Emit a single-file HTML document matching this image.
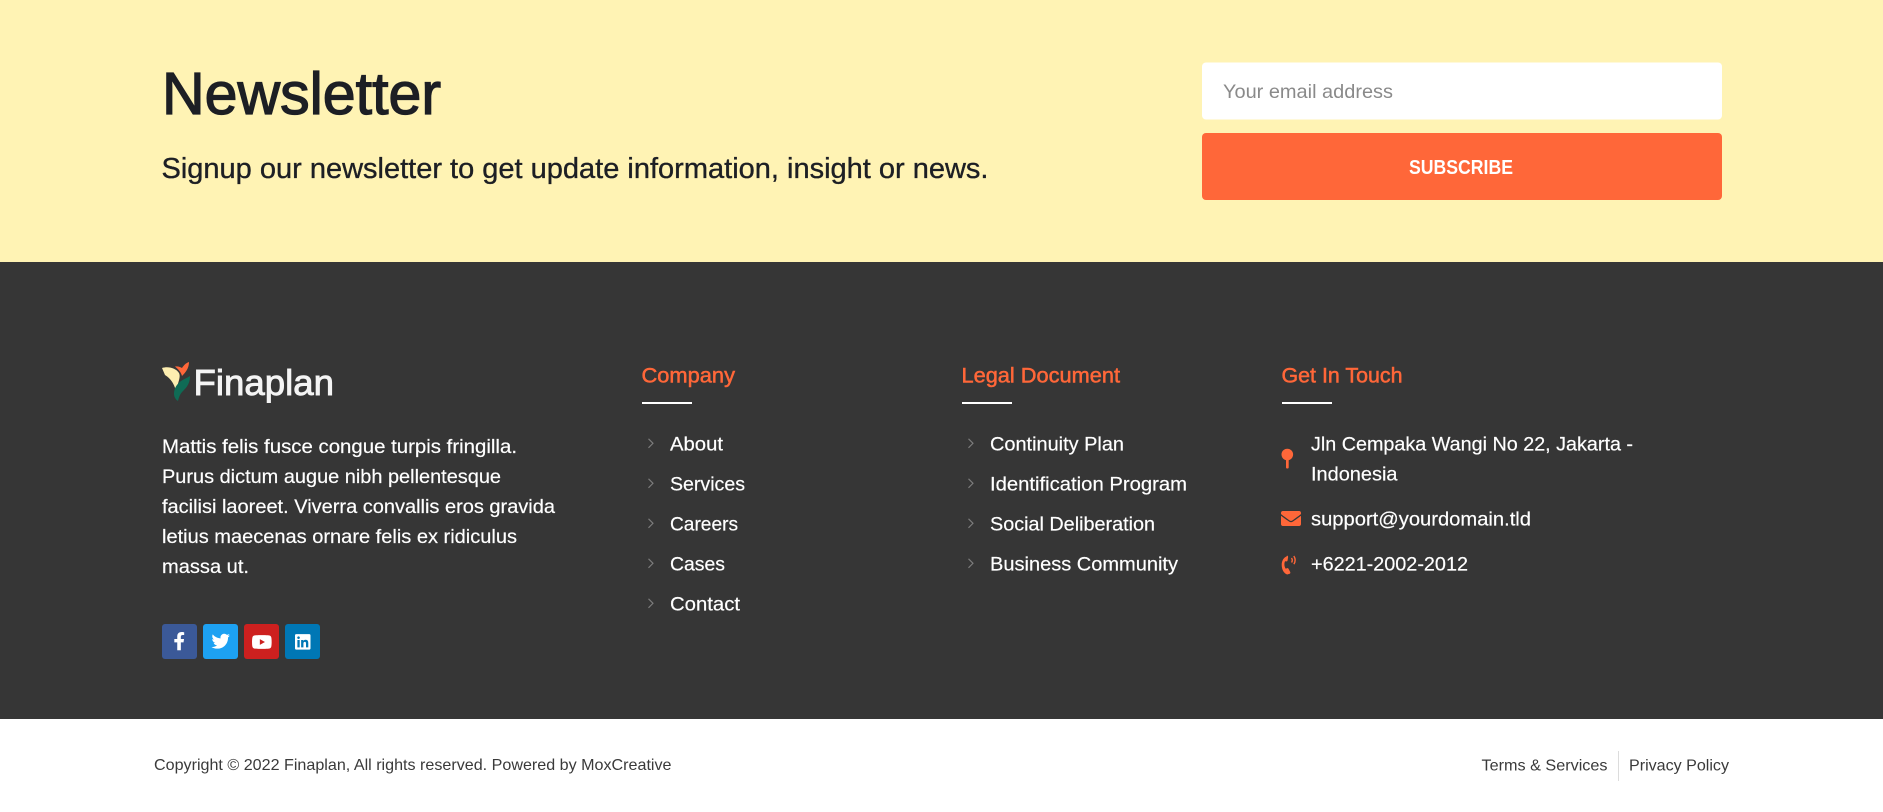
<!DOCTYPE html>
<html><head><meta charset="utf-8"><title>Finaplan Footer</title>
<style>
html,body{margin:0;padding:0;background:#fff;width:1883px;height:812px;overflow:hidden}
svg{display:block}
text{font-family:"Liberation Sans",sans-serif}
.w{fill:#fff;font-size:19.4px;stroke:#fff;stroke-width:.18px}
.h{fill:#ff6739;font-size:21px;stroke:#ff6739;stroke-width:.5px}
.g{fill:#3a3a3a;font-size:15.8px}
.c{fill:none;stroke:#7d7d7d;stroke-width:1.1}
</style></head><body>
<svg xmlns="http://www.w3.org/2000/svg" width="1883" height="812" viewBox="0 0 1883 812">
<rect width="1883" height="262" fill="#fff3b4"/>
<rect y="262" width="1883" height="457" fill="#363636"/>
<rect y="719" width="1883" height="93" fill="#fff"/>

<text x="162" y="114" font-size="59" fill="#1d1f24" stroke="#1d1f24" stroke-width="1.3" textLength="279" lengthAdjust="spacingAndGlyphs">Newsletter</text>
<text x="161.500" y="178" font-size="28.500" fill="#1d1f24" stroke="#1d1f24" stroke-width=".35" textLength="827" lengthAdjust="spacingAndGlyphs">Signup our newsletter to get update information, insight or news.</text>

<rect x="1202" y="62.500" width="520" height="57" rx="4" fill="#fff"/>
<text x="1223" y="98" font-size="19.400" fill="#8a8a8a" textLength="170" lengthAdjust="spacingAndGlyphs">Your email address</text>
<rect x="1202" y="133" width="520" height="67" rx="4" fill="#ff6739"/>
<text x="1409" y="174" font-size="20" font-weight="bold" fill="#fff" textLength="104" lengthAdjust="spacingAndGlyphs">SUBSCRIBE</text>

<!-- logo -->
<path d="M162 368C168 366 176 368 179 373C181 377 178 382 176 391C174 383 170 378 165 375Z" fill="#fdeeb0"/>
<path d="M175 366.500C178 366 180 367 182 368C184 365 186 363 189 362C189 368 186 372 182 376C181 372 178 369 175 366.500Z" fill="#ff6739"/>
<path d="M190 376C190 384 186 388 183 391C180 394 179 397 178 401C176 400 174 397 174 394C174 388 177 384 181 381C184 379 187 378 190 376Z" fill="#0f6b55"/>
<text x="193.500" y="395" font-size="36.500" fill="#f4f4f4" stroke="#f4f4f4" stroke-width=".9" textLength="140.500" lengthAdjust="spacingAndGlyphs">Finaplan</text>

<text class="w" x="162" y="453" textLength="355" lengthAdjust="spacingAndGlyphs">Mattis felis fusce congue turpis fringilla.</text>
<text class="w" x="162" y="483" textLength="339" lengthAdjust="spacingAndGlyphs">Purus dictum augue nibh pellentesque</text>
<text class="w" x="162" y="513" textLength="393" lengthAdjust="spacingAndGlyphs">facilisi laoreet. Viverra convallis eros gravida</text>
<text class="w" x="162" y="543" textLength="355" lengthAdjust="spacingAndGlyphs">letius maecenas ornare felis ex ridiculus</text>
<text class="w" x="162" y="573" textLength="87" lengthAdjust="spacingAndGlyphs">massa ut.</text>

<!-- social -->
<rect x="162" y="624" width="35" height="35" rx="3" fill="#3b5998"/>
<rect x="203" y="624" width="35" height="35" rx="3" fill="#1da1f2"/>
<rect x="244" y="624" width="35" height="35" rx="3" fill="#cd201f"/>
<rect x="285" y="624" width="35" height="35" rx="3" fill="#0077b5"/>
<svg x="173.500" y="632" width="11.500" height="18.400" viewBox="0 0 320 512"><path fill="#fff" d="M279.14 288l14.22-92.66h-88.91v-60.13c0-25.35 12.42-50.06 52.24-50.06h40.42V6.26S260.43 0 225.36 0c-73.22 0-121.08 44.38-121.08 124.72v70.62H22.89V288h81.39v224h100.17V288z"/></svg>
<svg x="211.500" y="632" width="18.400" height="18.400" viewBox="0 0 512 512"><path fill="#fff" d="M459.37 151.716c.325 4.548.325 9.097.325 13.645 0 138.72-105.583 298.558-298.558 298.558-59.452 0-114.68-17.219-161.137-47.106 8.447.974 16.568 1.299 25.34 1.299 49.055 0 94.213-16.568 130.274-44.832-46.132-.975-84.792-31.188-98.112-72.772 6.498.974 12.995 1.624 19.818 1.624 9.421 0 18.843-1.3 27.614-3.573-48.081-9.747-84.143-51.98-84.143-102.985v-1.299c13.969 7.797 30.214 12.67 47.431 13.319-28.264-18.843-46.781-51.005-46.781-87.391 0-19.492 5.197-37.36 14.294-52.954 51.655 63.675 129.3 105.258 216.365 109.807-1.624-7.797-2.599-15.918-2.599-24.04 0-57.828 46.782-104.934 104.934-104.934 30.213 0 57.502 12.67 76.67 33.137 23.715-4.548 46.456-13.32 66.599-25.34-7.798 24.366-24.366 44.833-46.132 57.827 21.117-2.273 41.584-8.122 60.426-16.243-14.292 20.791-32.161 39.308-52.628 54.253z"/></svg>
<svg x="251.500" y="632.800" width="20.700" height="20.700" viewBox="0 0 576 576"><path fill="#fff" fill-rule="evenodd" d="M549.655 124.083c-6.281-23.65-24.787-42.276-48.284-48.597C458.781 64 288 64 288 64S117.22 64 74.629 75.486c-23.497 6.322-42.003 24.947-48.284 48.597-11.412 42.867-11.412 132.305-11.412 132.305s0 89.438 11.412 132.305c6.281 23.65 24.787 41.5 48.284 47.821C117.22 448 288 448 288 448s170.78 0 213.371-11.486c23.497-6.321 42.003-24.171 48.284-47.821 11.412-42.867 11.412-132.305 11.412-132.305s0-89.438-11.412-132.305zm-317.51 213.508V175.185l142.739 81.205-142.739 81.201z"/></svg>
<svg x="295" y="633" width="15.500" height="17.700" viewBox="0 0 448 512"><path fill="#fff" d="M416 32H31.9C14.3 32 0 46.5 0 64.3v383.4C0 465.5 14.3 480 31.9 480H416c17.6 0 32-14.5 32-32.3V64.3c0-17.8-14.4-32.3-32-32.3zM135.4 416H69V202.2h66.5V416zm-33.2-243c-21.3 0-38.5-17.3-38.5-38.5S80.9 96 102.2 96c21.2 0 38.5 17.3 38.5 38.5 0 21.3-17.2 38.5-38.5 38.5zm282.1 243h-66.4V312c0-24.8-.5-56.7-34.5-56.7-34.6 0-39.9 26.4-39.9 53.6V416h-66.4V202.2h63.7v29.2h.9c8.9-16.8 30.6-34.5 62.9-34.5 67.2 0 79.7 44.3 79.7 101.9V416z"/></svg>

<!-- headings -->
<text class="h" x="641.500" y="382.500" textLength="93.500" lengthAdjust="spacingAndGlyphs">Company</text>
<text class="h" x="961.500" y="382.500" textLength="158.500" lengthAdjust="spacingAndGlyphs">Legal Document</text>
<text class="h" x="1281.500" y="382.500" textLength="121" lengthAdjust="spacingAndGlyphs">Get In Touch</text>
<rect x="642" y="402" width="50" height="2" fill="#fff"/>
<rect x="962" y="402" width="50" height="2" fill="#fff"/>
<rect x="1282" y="402" width="50" height="2" fill="#fff"/>

<!-- lists -->
<path class="c" d="M648.500 438.800l4.500 4.500-4.500 4.500M648.500 478.800l4.500 4.500-4.500 4.500M648.500 518.800l4.500 4.500-4.500 4.500M648.500 558.800l4.500 4.500-4.500 4.500M648.500 598.800l4.500 4.500-4.500 4.500M968.500 438.800l4.500 4.500-4.500 4.500M968.500 478.800l4.500 4.500-4.500 4.500M968.500 518.800l4.500 4.500-4.500 4.500M968.500 558.800l4.500 4.500-4.500 4.500"/>
<text class="w" x="670" y="450.700" textLength="53" lengthAdjust="spacingAndGlyphs">About</text>
<text class="w" x="670" y="490.700" textLength="75" lengthAdjust="spacingAndGlyphs">Services</text>
<text class="w" x="670" y="530.700" textLength="68" lengthAdjust="spacingAndGlyphs">Careers</text>
<text class="w" x="670" y="570.700" textLength="55" lengthAdjust="spacingAndGlyphs">Cases</text>
<text class="w" x="670" y="610.700" textLength="70" lengthAdjust="spacingAndGlyphs">Contact</text>
<text class="w" x="990" y="450.700" textLength="134" lengthAdjust="spacingAndGlyphs">Continuity Plan</text>
<text class="w" x="990" y="490.700" textLength="197" lengthAdjust="spacingAndGlyphs">Identification Program</text>
<text class="w" x="990" y="530.700" textLength="165" lengthAdjust="spacingAndGlyphs">Social Deliberation</text>
<text class="w" x="990" y="570.700" textLength="188" lengthAdjust="spacingAndGlyphs">Business Community</text>

<!-- contact -->
<circle cx="1287.300" cy="454.500" r="5.800" fill="#ff6739"/>
<rect x="1286" y="459" width="2.700" height="9.500" rx="1" fill="#ff6739"/>
<svg x="1281" y="510.500" width="20" height="26" viewBox="0 0 512 666"><path fill="#ff6739" d="M502.3 190.8c3.9-3.1 9.7-.2 9.7 4.7V400c0 26.5-21.5 48-48 48H48c-26.5 0-48-21.5-48-48V195.600c0-5 5.700-7.800 9.700-4.700 22.400 17.400 52.100 39.500 154.100 113.600 21.100 15.400 56.700 47.800 92.200 47.600 35.700.3 72-32.800 92.300-47.600 102-74.100 131.600-96.300 154-113.700zM256 320c23.200.4 56.600-29.200 73.400-41.400 132.700-96.300 142.800-104.700 173.400-128.700 5.800-4.500 9.200-11.500 9.200-18.900v-19c0-26.500-21.500-48-48-48H48C21.500 64 0 85.500 0 112v19c0 7.400 3.400 14.300 9.200 18.900 30.600 23.900 40.700 32.400 173.400 128.700 16.800 12.200 50.200 41.800 73.400 41.400z" transform="translate(0 -50)"/></svg>
<path fill="#ff6739" d="M1286.500 556.500c-3 1-4.800 4.500-4.800 8.500 0 4.500 2.300 8.500 5.500 9.500l2.500-.8c.8-.4.8-1.200.4-2l-1.600-3c-.4-.6-1-.8-1.700-.4l-1 .5c-1-1.200-1.500-3-1.400-5 .1-1 .3-1.900.7-2.600l1.200.2c.7.100 1.200-.3 1.300-1l.5-3.300c.1-.9-.3-1.400-1.100-1.500z"/>
<path fill="none" stroke="#ff6739" stroke-width="1.400" d="M1291.500 558c1 1.400 1 3 .1 4.500M1293.800 556c1.700 2.500 1.700 5.500.1 8.200"/>
<text class="w" x="1311" y="450.700" textLength="322" lengthAdjust="spacingAndGlyphs">Jln Cempaka Wangi No 22, Jakarta -</text>
<text class="w" x="1311" y="480.700" textLength="86.500" lengthAdjust="spacingAndGlyphs">Indonesia</text>
<text class="w" x="1311" y="525.500" textLength="220" lengthAdjust="spacingAndGlyphs">support@yourdomain.tld</text>
<text class="w" x="1311" y="570.700" textLength="157" lengthAdjust="spacingAndGlyphs">+6221-2002-2012</text>

<!-- bottom -->
<text class="g" x="154" y="770" textLength="517.500" lengthAdjust="spacingAndGlyphs">Copyright © 2022 Finaplan, All rights reserved. Powered by MoxCreative</text>
<text class="g" x="1481.500" y="770.500" textLength="126" lengthAdjust="spacingAndGlyphs">Terms &amp; Services</text>
<rect x="1618" y="751" width="1" height="30" fill="#dcdcdc"/>
<text class="g" x="1629" y="770.500" textLength="100" lengthAdjust="spacingAndGlyphs">Privacy Policy</text>
</svg>
</body></html>
